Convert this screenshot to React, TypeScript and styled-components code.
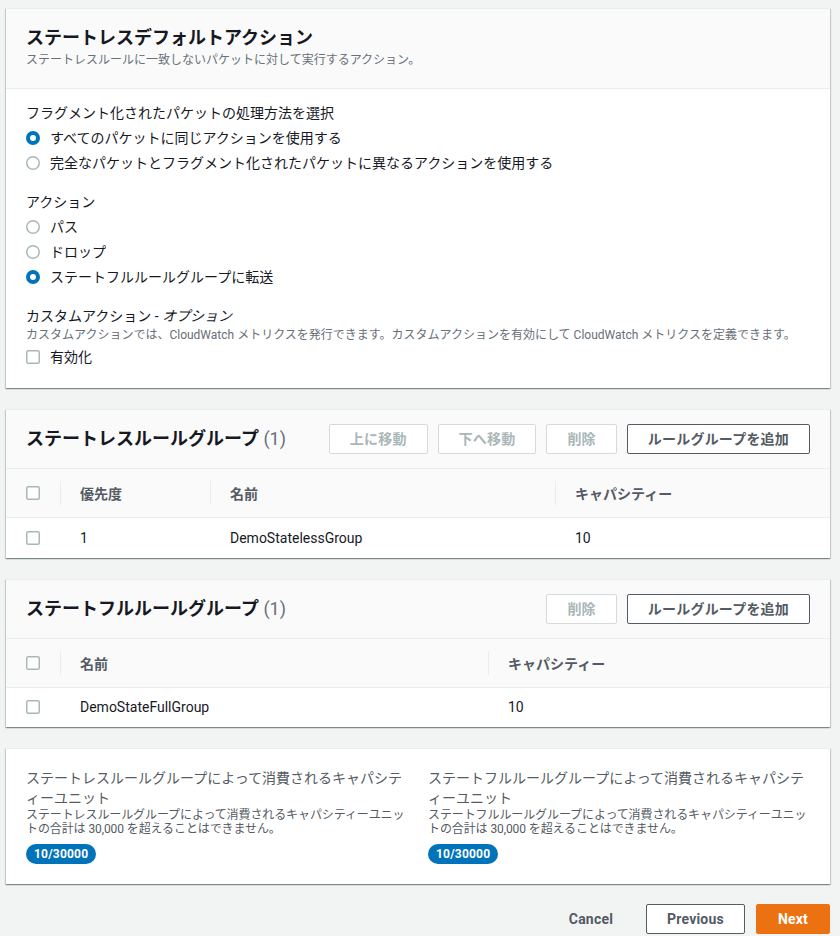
import React from "react";
import styled, { createGlobalStyle, css } from "styled-components";

const GlobalStyle = createGlobalStyle`
  html, body { margin: 0; padding: 0; background: #f2f3f3; }
  body {
    font-family: Roboto, "Noto Sans CJK JP", sans-serif;
    font-size: 14px;
    color: #16191f;
    -webkit-font-smoothing: antialiased;
  }
  * { box-sizing: border-box; }
`;

const Page = styled.div`
  padding: 8px 10px 0 6px;
  display: flex;
  flex-direction: column;
  gap: 21px;
`;

const Container = styled.section`
  background: #fff;
  border-top: 1px solid #eaeded;
  box-shadow: 0 1px 1px 0 rgba(0, 28, 36, 0.3), 1px 1px 1px 0 rgba(0, 28, 36, 0.15),
    -1px 1px 1px 0 rgba(0, 28, 36, 0.15);
`;

const Header = styled.div<{ $compact?: boolean }>`
  background: #fafafa;
  border-bottom: 1px solid #eaeded;
  ${(p) =>
    p.$compact
      ? css`
          padding: 14px 20px;
          display: flex;
          align-items: center;
          justify-content: space-between;
        `
      : css`
          padding: 18px 20px 19px;
        `}
`;

const Title = styled.h2`
  margin: 0;
  font-size: 18px;
  line-height: 22px;
  font-weight: 700;
  color: #16191f;
`;

const Counter = styled.span`
  font-weight: 400;
  color: #687078;
`;

const Subtitle = styled.div`
  margin-top: 2px;
  font-size: 12px;
  line-height: 18px;
  color: #687078;
`;

const Body = styled.div`
  padding: 14px 20px 19px;
`;

const Field = styled.div<{ $first?: boolean }>`
  margin-top: ${(p) => (p.$first ? 0 : 17)}px;
`;

const Label = styled.div`
  font-size: 14px;
  line-height: 20px;
  color: #16191f;
`;

const Em = styled.i`
  font-style: italic;
`;

const Description = styled.div`
  font-size: 12px;
  line-height: 18px;
  color: #687078;
`;

const OptionGroup = styled.div`
  margin-top: 2px;
  display: flex;
  flex-direction: column;
`;

const Option = styled.label`
  display: flex;
  align-items: center;
  gap: 10px;
  height: 25px;
  font-size: 14px;
  line-height: 20px;
  color: #16191f;
`;

const Actions = styled.div`
  display: flex;
  gap: 10px;
`;

const Button = styled.button<{ $variant?: "normal" | "disabled" | "primary" | "link" }>`
  font-family: inherit;
  font-size: 14px;
  font-weight: 700;
  line-height: 20px;
  padding: 4px 20px;
  border-radius: 2px;
  border: 1px solid #545b64;
  background: #fff;
  color: #545b64;
  letter-spacing: 0.2px;
  ${(p) =>
    p.$variant === "disabled" &&
    css`
      border-color: #d5dbdb;
      color: #aab7b8;
    `}
  ${(p) =>
    p.$variant === "primary" &&
    css`
      border-color: #ec7211;
      background: #ec7211;
      color: #fff;
      padding: 4px 21px;
    `}
  ${(p) =>
    p.$variant === "link" &&
    css`
      border-color: transparent;
      background: transparent;
      color: #545b64;
    `}
`;

const Table = styled.table`
  width: 100%;
  border-collapse: collapse;
  table-layout: fixed;
`;

const Th = styled.th`
  background: #fafafa;
  border-bottom: 1px solid #eaeded;
  padding: 12px 0;
  text-align: left;
  font-weight: 700;
  color: #545b64;
  font-size: 14px;
`;

const ThInner = styled.div<{ $first?: boolean }>`
  height: 24px;
  display: flex;
  align-items: center;
  padding: 0 19px 0 ${(p) => (p.$first ? 20 : 19)}px;
  border-left: ${(p) => (p.$first ? "none" : "1px solid #eaeded")};
`;

const Td = styled.td`
  height: 40px;
  padding: 0 19px 0 20px;
  font-size: 14px;
  line-height: 20px;
  color: #16191f;
  vertical-align: middle;
`;

const CellBox = styled.div`
  display: flex;
  align-items: center;
`;

const Summary = styled.div`
  padding: 19px 20px 20px;
  display: grid;
  grid-template-columns: 1fr 1fr;
  column-gap: 20px;
`;

const SummaryCol = styled.div`
  display: flex;
  flex-direction: column;
  align-items: flex-start;
`;

const SummaryLabel = styled.div`
  font-size: 14px;
  line-height: 20px;
  color: #545b64;
`;

const SummaryDesc = styled.div`
  font-size: 12px;
  line-height: 14px;
  letter-spacing: -0.1px;
  color: #545b64;
`;

const Badge = styled.span`
  margin-top: 8px;
  height: 20px;
  padding: 0 8px;
  border-radius: 10px;
  background: #0073bb;
  color: #fff;
  font-size: 12px;
  font-weight: 700;
  line-height: 20px;
  letter-spacing: 0.2px;
`;

const Footer = styled.div`
  margin-top: -1px;
  display: flex;
  justify-content: flex-end;
  gap: 10px;
`;

const CancelButton = styled(Button)`
  margin-right: 2px;
`;

const NextButton = styled(Button)`
  margin-left: 1px;
`;

const Radio = ({ checked }: { checked?: boolean }) => (
  <svg width="14" height="14" viewBox="0 0 14 14" style={{ flex: "none" }}>
    {checked ? (
      <>
        <circle cx="7" cy="7" r="7" fill="#0073bb" />
        <circle cx="7" cy="7" r="3" fill="#fff" />
      </>
    ) : (
      <circle cx="7" cy="7" r="6.25" fill="#fff" stroke="#aab7b8" strokeWidth="1.5" />
    )}
  </svg>
);

const Checkbox = () => (
  <svg width="14" height="14" viewBox="0 0 14 14" style={{ flex: "none" }}>
    <rect x="0.75" y="0.75" width="12.5" height="12.5" rx="1.5" fill="#fff" stroke="#aab7b8" strokeWidth="1.5" />
  </svg>
);

type Col = { key: string; label: string; width?: number };

const RuleTable = ({ cols, row }: { cols: Col[]; row: string[] }) => (
  <Table>
    <colgroup>
      <col style={{ width: 54 }} />
      {cols.map((c) => (
        <col key={c.key} style={c.width ? { width: c.width } : undefined} />
      ))}
    </colgroup>
    <thead>
      <tr>
        <Th>
          <ThInner $first>
            <Checkbox />
          </ThInner>
        </Th>
        {cols.map((c) => (
          <Th key={c.key}>
            <ThInner>{c.label}</ThInner>
          </Th>
        ))}
      </tr>
    </thead>
    <tbody>
      <tr>
        <Td>
          <CellBox>
            <Checkbox />
          </CellBox>
        </Td>
        {row.map((v, i) => (
          <Td key={i}>{v}</Td>
        ))}
      </tr>
    </tbody>
  </Table>
);

export default function App() {
  return (
    <>
      <GlobalStyle />
      <Page>
        <Container>
          <Header>
            <Title>ステートレスデフォルトアクション</Title>
            <Subtitle>ステートレスルールに一致しないパケットに対して実行するアクション。</Subtitle>
          </Header>
          <Body>
            <Field $first>
              <Label>フラグメント化されたパケットの処理方法を選択</Label>
              <OptionGroup>
                <Option>
                  <Radio checked />
                  すべてのパケットに同じアクションを使用する
                </Option>
                <Option>
                  <Radio />
                  完全なパケットとフラグメント化されたパケットに異なるアクションを使用する
                </Option>
              </OptionGroup>
            </Field>
            <Field>
              <Label>アクション</Label>
              <OptionGroup>
                <Option>
                  <Radio />
                  パス
                </Option>
                <Option>
                  <Radio />
                  ドロップ
                </Option>
                <Option>
                  <Radio checked />
                  ステートフルルールグループに転送
                </Option>
              </OptionGroup>
            </Field>
            <Field>
              <Label>
                カスタムアクション - <Em>オプション</Em>
              </Label>
              <Description>
                カスタムアクションでは、CloudWatch メトリクスを発行できます。カスタムアクションを有効にして CloudWatch メトリクスを定義できます。
              </Description>
              <Option>
                <Checkbox />
                有効化
              </Option>
            </Field>
          </Body>
        </Container>

        <Container>
          <Header $compact>
            <Title>
              ステートレスルールグループ <Counter>(1)</Counter>
            </Title>
            <Actions>
              <Button $variant="disabled">上に移動</Button>
              <Button $variant="disabled">下へ移動</Button>
              <Button $variant="disabled">削除</Button>
              <Button>ルールグループを追加</Button>
            </Actions>
          </Header>
          <RuleTable
            cols={[
              { key: "p", label: "優先度", width: 150 },
              { key: "n", label: "名前", width: 345 },
              { key: "c", label: "キャパシティー" },
            ]}
            row={["1", "DemoStatelessGroup", "10"]}
          />
        </Container>

        <Container>
          <Header $compact>
            <Title>
              ステートフルルールグループ <Counter>(1)</Counter>
            </Title>
            <Actions>
              <Button $variant="disabled">削除</Button>
              <Button>ルールグループを追加</Button>
            </Actions>
          </Header>
          <RuleTable
            cols={[
              { key: "n", label: "名前", width: 428 },
              { key: "c", label: "キャパシティー" },
            ]}
            row={["DemoStateFullGroup", "10"]}
          />
        </Container>

        <Container>
          <Summary>
            <SummaryCol>
              <SummaryLabel>ステートレスルールグループによって消費されるキャパシティーユニット</SummaryLabel>
              <SummaryDesc>
                ステートレスルールグループによって消費されるキャパシティーユニットの合計は 30,000 を超えることはできません。
              </SummaryDesc>
              <Badge>10/30000</Badge>
            </SummaryCol>
            <SummaryCol>
              <SummaryLabel>ステートフルルールグループによって消費されるキャパシティーユニット</SummaryLabel>
              <SummaryDesc>
                ステートフルルールグループによって消費されるキャパシティーユニットの合計は 30,000 を超えることはできません。
              </SummaryDesc>
              <Badge>10/30000</Badge>
            </SummaryCol>
          </Summary>
        </Container>

        <Footer>
          <CancelButton $variant="link">Cancel</CancelButton>
          <Button>Previous</Button>
          <NextButton $variant="primary">Next</NextButton>
        </Footer>
      </Page>
    </>
  );
}
